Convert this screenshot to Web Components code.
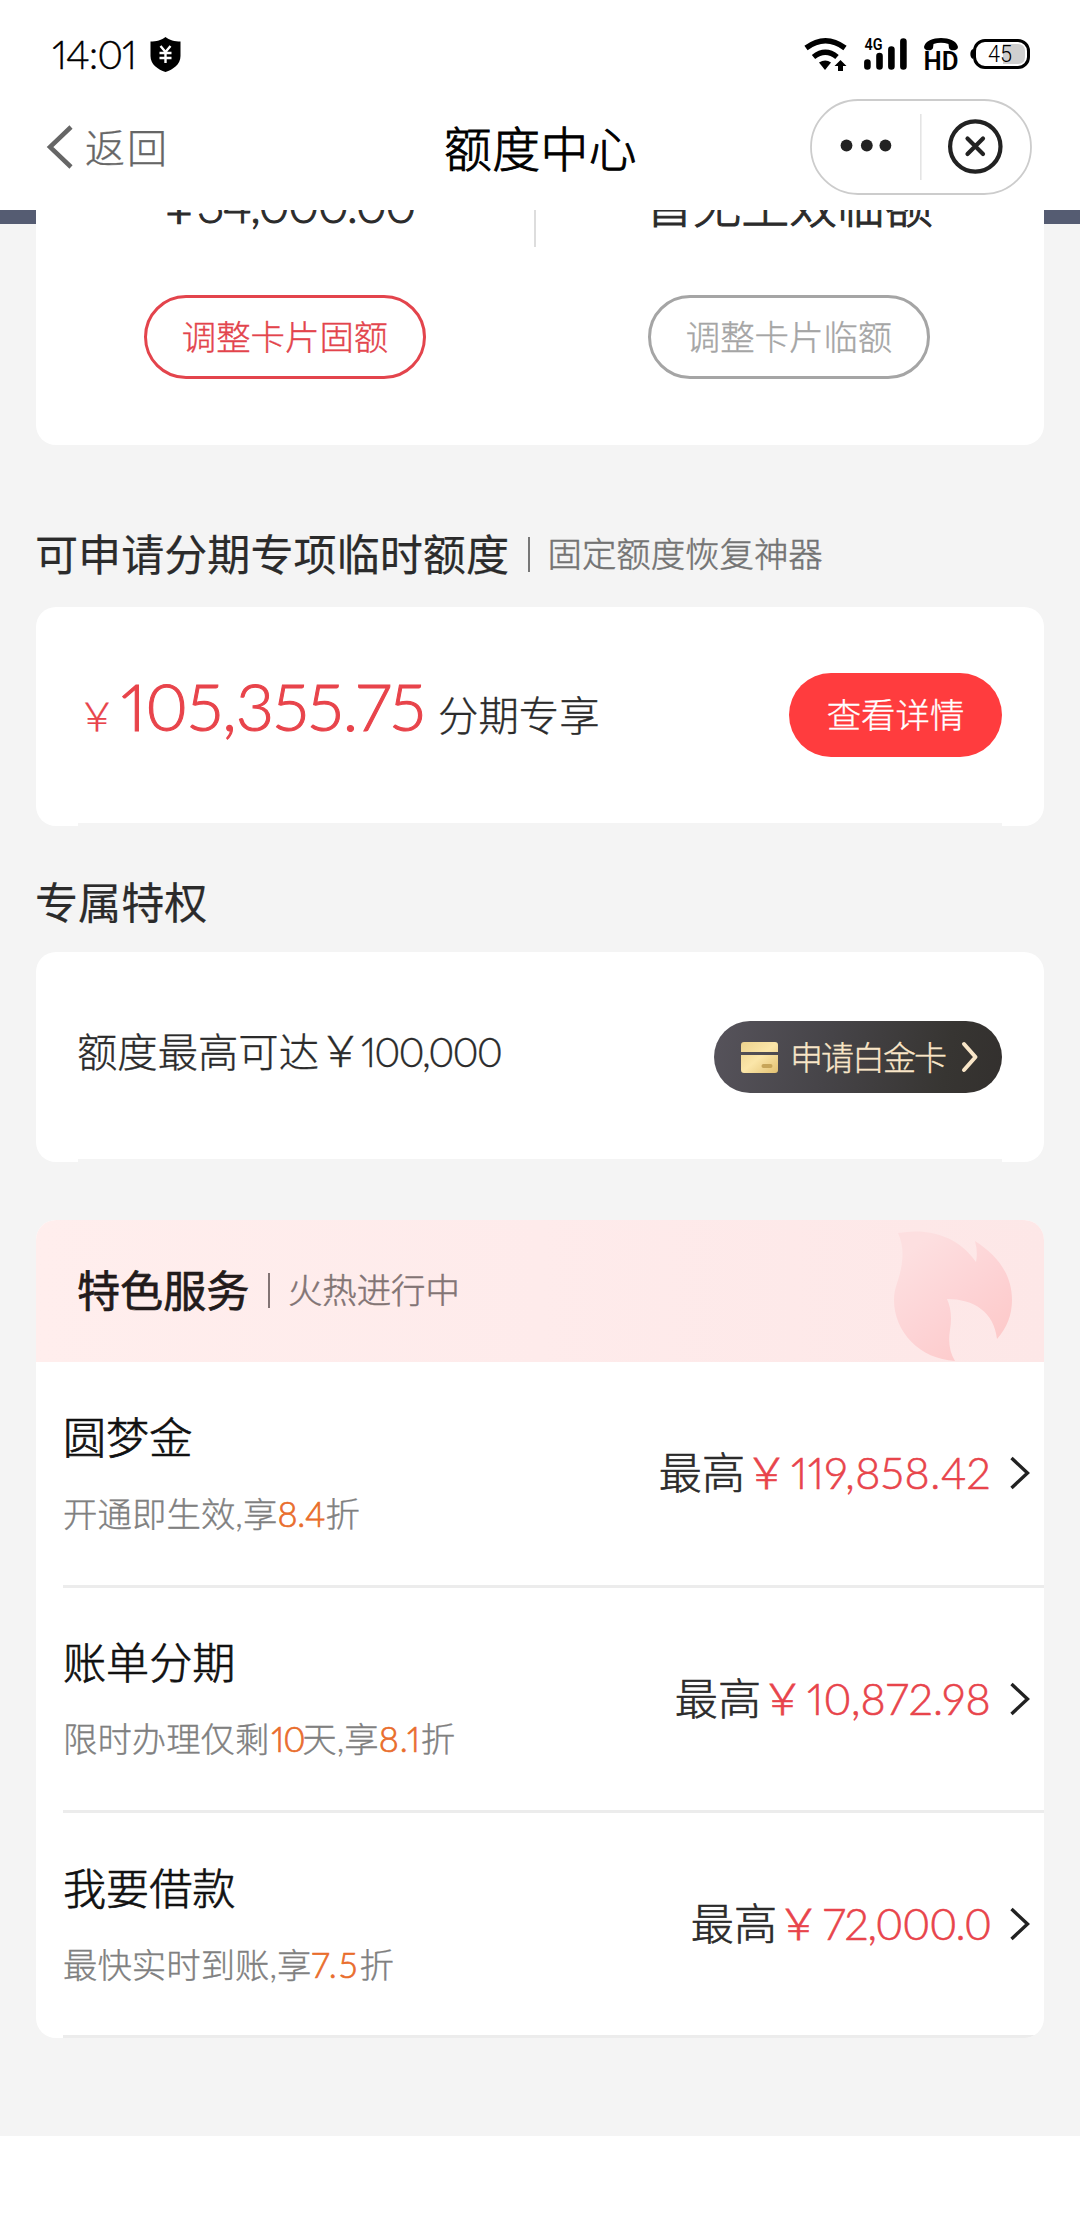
<!DOCTYPE html>
<html lang="zh-CN">
<head>
<meta charset="utf-8">
<title>额度中心</title>
<style>
body{margin:0;background:#fff;font-family:Lato,"Noto Sans CJK SC",sans-serif;font-weight:300;color:#2b2b2b;-webkit-text-stroke:.35px}
</style>
</head>
<body>
<quota-page></quota-page>
<script>
const def=(name,html,after)=>customElements.define(name,class extends HTMLElement{
  constructor(){super();this.attachShadow({mode:'open'}).innerHTML=html}
  connectedCallback(){after&&after(this)}
});

/* Text run tracked to fill a given advance width */
class FitText extends HTMLElement{
  constructor(){super();this.attachShadow({mode:'open'}).innerHTML='<style>:host{display:inline-block;white-space:nowrap;font-variant-numeric:proportional-nums}</style><span><slot></slot></span>'}
  connectedCallback(){
    const w=+this.getAttribute('w'),n=[...this.textContent].length,s=this.shadowRoot.querySelector('span');
    s.style.letterSpacing='0px';
    const d=(w-s.getBoundingClientRect().width)/n;
    s.style.letterSpacing=d.toFixed(3)+'px';
    this.style.width=w+'px';
  }
}

def('status-bar',`<style>
:host{display:flex;height:99px;box-sizing:border-box;padding:34px 40px 0 52px;color:#000;line-height:40px}
fit-text{font-size:40px}
.shield{margin:3px 0 0 14px}
.icons{margin-left:auto;margin-top:1px}
svg{display:block}
svg text{font-family:Roboto,sans-serif;-webkit-text-stroke:0}
</style>
<fit-text w="84">14:01</fit-text>
<svg class="shield" width="31" height="35" viewBox="0 0 31 35"><path d="M15.5 0C19 3 25 4.600 30.500 4.600V19C30.500 27.500 23 32.500 15.500 35C8 32.500 .5 27.500 .5 19V4.600C6 4.600 12 3 15.500 0Z" fill="#000"/><path d="M10.500 9L15.500 15L20.500 9M15.500 15V26M9.500 16H21.500M9.500 21H21.500" fill="none" stroke="#fff" stroke-width="2.400"/></svg>
<svg class="icons" width="236" height="40" viewBox="4 0 236 40">
 <g fill="none" stroke="#000" stroke-width="5.400"><path d="M6 13Q25.500-1.500 45 13"/><path d="M13.500 22Q25.500 12.500 37 22"/></g>
 <path d="M19 27.500Q25.500 23.500 31 27.500L25 35Z"/><path d="M40.500 25L46.500 31H43V36H38V31H34.500Z"/>
 <text x="64.500" y="15" font-size="16" font-weight="600" textLength="18" lengthAdjust="spacingAndGlyphs">4G</text>
 <g stroke="#000" stroke-width="6.600" stroke-linecap="round"><path d="M67.400 27.500V31.500M79.500 21V31.500M91.400 14.500V31.500M103.400 6.500V31.500"/></g>
 <path d="M124 12C126 0 156 0 158 12C158 16 150 16.500 149 13L148.500 9Q141 6.500 133.500 9L133 13C132 16.500 124 16 124 12Z"/>
 <text x="123.500" y="35" font-size="25" font-weight="600" textLength="35" lengthAdjust="spacingAndGlyphs">HD</text>
 <rect x="174.500" y="5.500" width="54" height="27" rx="10.500" fill="none" stroke="#000" stroke-width="3"/>
 <path d="M173 14C169.500 15 169.500 23 173 24Z"/>
 <path d="M203 9H218Q225 9 225 16V22Q225 29 218 29H203Z" fill="#cfcfcf"/>
 <text x="188" y="27" font-size="23" font-weight="300" textLength="24" lengthAdjust="spacingAndGlyphs">45</text>
</svg>`);

def('nav-bar',`<style>
:host{display:grid;grid-template-columns:444px 1fr auto;height:111px;padding:0 48px 0 0}
.back{display:flex;padding-left:46px;color:#666;font-size:40px;line-height:56px}
.back svg{margin-top:26px;width:28px;margin-right:11px}
.back fit-text{margin-top:21px}
h1{margin:20px 0 0;font-size:47.800px;line-height:60px;font-weight:300;color:#000;-webkit-text-stroke:.9px}
</style>
<div class="back"><svg width="28" height="44" viewBox="0 0 28 44"><path d="M25 2L4 22L25 42" fill="none" stroke="#666" stroke-width="4.500"/></svg><fit-text w="84">返回</fit-text></div>
<h1><fit-text w="193">额度中心</fit-text></h1>
<svg width="222" height="96" viewBox="0 0 222 96"><rect x="1" y="1" width="220" height="94" rx="47" fill="#fff" stroke="#ccc" stroke-width="1.800"/><path d="M110.800 15V81" stroke="#e4e4e4" stroke-width="1.600"/><g fill="#222"><circle cx="36.500" cy="46.500" r="5.900"/><circle cx="56.800" cy="46.500" r="5.900"/><circle cx="75.400" cy="46.500" r="5.900"/></g><g fill="none" stroke="#222" stroke-width="4.200" stroke-linecap="round"><circle cx="165.300" cy="47.500" r="25.200"/><path d="M157.500 39.500L173 55M173 39.500L157.500 55"/></g></svg>`);

def('outline-pill',`<style>
:host{display:flex;justify-content:center;align-items:center;box-sizing:border-box;width:282px;height:84px;border:3px solid;border-radius:42px;font-size:34.400px;line-height:50px;padding-bottom:1px}
</style><slot></slot>`);

def('limit-card',`<style>
:host{display:flex;height:235px;margin:0 36px;background:#fff;border-radius:0 0 20px 20px;overflow:hidden}
.col{display:flex;flex-direction:column;align-items:center;width:498px}
.col+i+.col{width:506px}
i{width:2px;height:37px;background:#ddd}
.v{margin-top:-35px;height:60px;line-height:60px;font-size:48px;margin-bottom:60px;font-weight:300;-webkit-text-stroke:1px;white-space:nowrap}
.r{color:#e3444c}.g{color:#a5a5a5}
</style>
<div class="col"><div class="v"><fit-text w="42">￥</fit-text><fit-text w="218">34,000.00</fit-text></div><outline-pill class="r">调整卡片固额</outline-pill></div>
<i></i>
<div class="col"><div class="v"><fit-text w="287">暂无生效临额</fit-text></div><outline-pill class="g">调整卡片临额</outline-pill></div>`);

def('section-title',`<style>
:host{display:flex;align-items:center;height:60px;line-height:60px;font-size:43.100px;font-weight:400;color:#2b2b2b;white-space:nowrap;-webkit-text-stroke:.2px}
i{width:1.500px;height:35px;background:var(--sub,#777);margin:0 18px 0 19px}
small{font-size:34.400px;font-weight:300;color:var(--sub,#737373);-webkit-text-stroke:.5px}
</style><slot></slot>`,e=>{
  const s=e.getAttribute('sub');
  if(s&&!e.shadowRoot.querySelector('i'))e.shadowRoot.append(document.createElement('i'),Object.assign(document.createElement('small'),{textContent:s}));
});

/* White card with a page-coloured hairline along its inner bottom edge */
def('info-card',`<style>
:host{display:flex;flex-direction:column;justify-content:space-between;margin:0 36px;background:#fff;border-radius:20px;box-sizing:border-box}
.row{display:flex;align-items:flex-start;justify-content:space-between;padding:0 42px 0 41px}
i{height:3px;margin:0 42px;background:#f4f4f4}
</style><div class="row"><slot></slot></div><i></i>`);

def('service-row',`<style>
:host{display:flex;flex-direction:column;height:226px;margin-left:27px;white-space:nowrap}
.main{display:flex;flex:1;padding-right:13px}
.l{flex:1}
.t{margin-top:var(--top,45px);height:60px;line-height:60px;font-size:43.100px;font-weight:300;color:#111;-webkit-text-stroke:.7px}
.s{margin-top:22px;height:50px;line-height:50px;font-size:34.400px;color:#808080}
.m{display:flex;margin-top:80px;height:60px;line-height:60px;font-size:43.100px;-webkit-text-stroke:.6px}
.chev{margin:94px 0 0 18px}
.line{height:3px;background:#ececec}
</style>
<div class="main"><div class="l"><div class="t"><slot name="title"></slot></div><div class="s"><slot name="desc"></slot></div></div>
<div class="m"><slot></slot></div>
<svg class="chev" width="22" height="34" viewBox="0 0 22 34"><path d="M2.500 2L18.500 17L2.500 32" fill="none" stroke="#222" stroke-width="3.400"/></svg></div><div class="line"></div>`);

def('hot-banner',`<style>
:host{display:flex;align-items:center;justify-content:space-between;height:142px;padding-left:41px;background:linear-gradient(90deg,#ffeeed,#feebeb 50%,#fde7e7);--sub:#827474}
section-title{color:#221b1b;margin-bottom:2px;-webkit-text-stroke:.7px}
svg{display:block}
</style><section-title sub="火热进行中">特色服务</section-title>
<svg width="154" height="142" viewBox="0 0 154 142"><defs><linearGradient id="f" x1=".2" y1=".1" x2=".8" y2=".9"><stop offset="0" stop-color="#fddfe0"/><stop offset=".55" stop-color="#fdd3d5"/><stop offset="1" stop-color="#fdcaca"/></linearGradient></defs><path fill="url(#f)" d="M8 13C38 8 67 15 86 42Q88 32 85 21C107 35 122 54 122 80Q122 102 107 119C104 92 84 79 57 79Q63 92 60 110Q57 128 65 141C30 139 4 112 4 80C4 66 10 60 12 42Q14 26 8 13Z"/></svg>`);

def('quota-page',`<style>
:host{display:block;width:1080px;height:2232px;overflow:hidden}
main{height:1926px;background:linear-gradient(#555c72 14px,#f4f4f4 14px)}
.red{color:#e8444b}
.y{-webkit-text-stroke:.2px}
.h1{margin:79px 36px 23px 35px}
.h2{margin:46px 36px 20px 35px}
.c2{height:219px;padding-top:54px}
.c3{height:210px;padding-top:69px}
.price{height:90px;line-height:90px;font-size:40.400px;white-space:nowrap}
.price .num{font-size:66px;-webkit-text-stroke:1.100px}
.price .y{font-size:40px}
.go{display:flex;justify-content:center;align-items:center;width:213px;height:84px;margin-top:12px;border-radius:42px;background:#ff3c3e;color:#fff;font-size:34.400px;line-height:50px}
.max{height:60px;line-height:60px;font-size:40.300px;white-space:nowrap}
.plat{display:flex;align-items:center;box-sizing:border-box;width:288px;height:72px;padding-left:27px;border-radius:36px;background:linear-gradient(100deg,#56535b,#464448 40%,#373532 80%,#33302e);color:#f9e6c8;font-size:33px;line-height:50px}
.plat fit-text{margin:0 16px 0 12px}
.svc{margin:58px 36px 0;background:#fff;border-radius:20px;overflow:hidden;height:818px}
em{font-style:normal;color:#e96d2c;-webkit-text-stroke:.7px}
.in{margin:0 -2px 0 2px}
</style>
<status-bar></status-bar><nav-bar></nav-bar>
<main>
<limit-card></limit-card>
<section-title class="h1" sub="固定额度恢复神器">可申请分期专项临时额度</section-title>
<info-card class="c2"><div class="price"><fit-text class="red y" w="44">￥</fit-text><fit-text class="red num" w="304">105,355.75</fit-text><span style="margin-left:13px">分期专享</span></div><div class="go">查看详情</div></info-card>
<section-title class="h2">专属特权</section-title>
<info-card class="c3"><div class="max"><fit-text w="242">额度最高可达</fit-text><fit-text w="42" style="font-size:43px">￥</fit-text><fit-text w="140">100,000</fit-text></div>
<div class="plat"><svg width="37" height="31" viewBox="0 0 37 31"><defs><linearGradient id="g" x1="0" y1="0" x2="1" y2="1"><stop offset="0" stop-color="#ecd28d"/><stop offset=".5" stop-color="#fbe6a9"/><stop offset="1" stop-color="#e2c071"/></linearGradient></defs><path d="M3 0H34Q37 0 37 3V10H0V3Q0 0 3 0ZM0 13H37V28Q37 31 34 31H3Q0 31 0 28Z" fill="url(#g)"/><rect x="20.500" y="22" width="11" height="4" rx="2" fill="#c7a559"/></svg><fit-text w="155">申请白金卡</fit-text><svg width="18" height="32" viewBox="0 0 18 32"><path d="M3 3L14.500 16L3 29" fill="none" stroke="#f9e6c8" stroke-width="4" stroke-linecap="round" stroke-linejoin="round"/></svg></div></info-card>
<div class="svc"><hot-banner></hot-banner>
<service-row><span slot="title">圆梦金</span><span slot="desc"><fit-text w="180">开通即生效,</fit-text>享<em><fit-text w="48">8.4</fit-text></em>折</span>最高<fit-text class="red" w="46">￥</fit-text><fit-text class="red" w="200">119,858.42</fit-text></service-row>
<service-row style="height:225px;--top:44px"><span slot="title">账单分期</span><span slot="desc">限时办理仅剩<em><fit-text class="in" w="33">10</fit-text></em><fit-text w="42">天,</fit-text>享<em><fit-text w="42">8.1</fit-text></em>折</span>最高<fit-text class="red" w="46">￥</fit-text><fit-text class="red" w="184">10,872.98</fit-text></service-row>
<service-row style="height:225px"><span slot="title">我要借款</span><span slot="desc"><fit-text w="214">最快实时到账,</fit-text>享<em><fit-text w="48">7.5</fit-text></em>折</span>最高<fit-text class="red" w="46">￥</fit-text><fit-text class="red" w="168">72,000.0</fit-text></service-row>
</div>
</main>`);
/* registered last so every run is measured inside the finished tree */
customElements.define('fit-text',FitText);
</script>
</body>
</html>
